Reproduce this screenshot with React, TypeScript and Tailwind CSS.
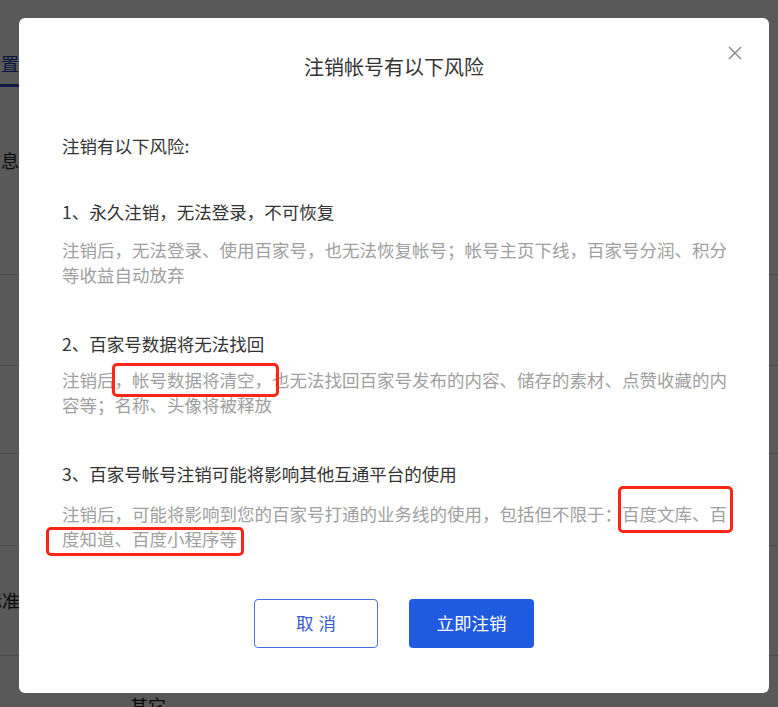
import React from "react";

const FONT = { fontFamily: '"Noto Sans CJK SC", "Noto Sans", sans-serif' };

function BgRowLabel({ text, className }: { text: string; className?: string }) {
  return (
    <div className={"flex justify-end w-[19px] overflow-hidden whitespace-nowrap " + (className || "")}>
      <span>{text}</span>
    </div>
  );
}

export default function App() {
  return (
    <div className="relative w-[778px] h-[707px] overflow-hidden bg-white text-[#222]" style={FONT}>
      {/* background page */}
      <div className="w-full h-full">
        <div className="h-[50px]" />
        <div className="flex flex-col w-[19px]">
          <BgRowLabel text="账号设置" className="text-[18px] leading-[26px] text-[#1d3bb5]" />
          <div className="h-[3px] mt-[8px] bg-[#2848c8]" />
        </div>
        <div className="flex flex-col mt-[60px]">
          <BgRowLabel text="基本信息" className="text-[18px] leading-[26px]" />
          <div className="shrink-0 h-[102px] border-b border-[#d8d8d8]" />
          <div className="shrink-0 h-[91px] border-b border-[#d8d8d8]" />
          <div className="shrink-0 h-[88px] border-b border-[#d8d8d8]" />
          <div className="shrink-0 h-[92px] border-b border-[#d8d8d8]" />
          <div className="shrink-0 flex items-center h-[110px] border-b border-[#d8d8d8] text-[18px]">
            <div className="flex justify-end w-[38px] overflow-hidden whitespace-nowrap">
              <span>标准码</span>
            </div>
          </div>
          <div className="pl-[130px] mt-[36px] text-[18px] leading-[26px]">其它</div>
        </div>
      </div>

      {/* overlay */}
      <div className="absolute inset-0 bg-black/65 flex items-start pt-[18px] pl-[19px]">
        <div className="relative w-[750px] h-[675px] bg-white rounded-[6px] flex flex-col">
          <button className="absolute right-[27px] top-[28px] w-[14px] h-[14px]">
            <svg width="14" height="14" viewBox="0 0 14 14">
              <path d="M1 1 L13 13 M13 1 L1 13" stroke="#8f8f8f" strokeWidth="1.6" fill="none" />
            </svg>
          </button>
          <div className="pt-[35px] text-center text-[20px] leading-[28px] text-[#333]">注销帐号有以下风险</div>

          <div className="pl-[43px] pr-[36px] mt-[52px] text-[17.5px] leading-[25px]">
            <div className="text-[#333]">注销有以下风险:</div>

            <div className="mt-[41px] text-[#333]">1、永久注销，无法登录，不可恢复</div>
            <div className="mt-[13px] text-[#a0a0a0]">
              注销后，无法登录、使用百家号，也无法恢复帐号；帐号主页下线，百家号分润、积分等收益自动放弃
            </div>

            <div className="mt-[44px] text-[#333]">2、百家号数据将无法找回</div>
            <div className="mt-[11px] text-[#a0a0a0]">
              注销后，帐号数据将清空，也无法找回百家号发布的内容、储存的素材、点赞收藏的内容等；名称、头像将被释放
            </div>

            <div className="mt-[44px] text-[#333]">3、百家号帐号注销可能将影响其他互通平台的使用</div>
            <div className="mt-[15px] text-[#a0a0a0]">
              注销后，可能将影响到您的百家号打通的业务线的使用，包括但不限于：百度文库、百度知道、百度小程序等
            </div>
          </div>

          <div className="flex justify-center gap-[31px] mt-[48px]">
            <button className="w-[124px] h-[49px] rounded-[4px] border border-[#4a6ee2] text-[#3a5bd4] text-[17.5px] tracking-[5px] pl-[5px] bg-white">
              取消
            </button>
            <button className="w-[125px] h-[49px] rounded-[4px] bg-[#1f5ae0] text-white text-[17.5px]">
              立即注销
            </button>
          </div>

          {/* annotation boxes */}
          <div className="absolute left-[93px] top-[345px] w-[167px] h-[34px] border-[3px] border-[#ff2418] rounded-[5px]" />
          <div className="absolute left-[599px] top-[468px] w-[115px] h-[47px] border-[3px] border-[#ff2418] rounded-[5px]" />
          <div className="absolute left-[27px] top-[509px] w-[198px] h-[29px] border-[3px] border-[#ff2418] rounded-[5px]" />
        </div>
      </div>
    </div>
  );
}
